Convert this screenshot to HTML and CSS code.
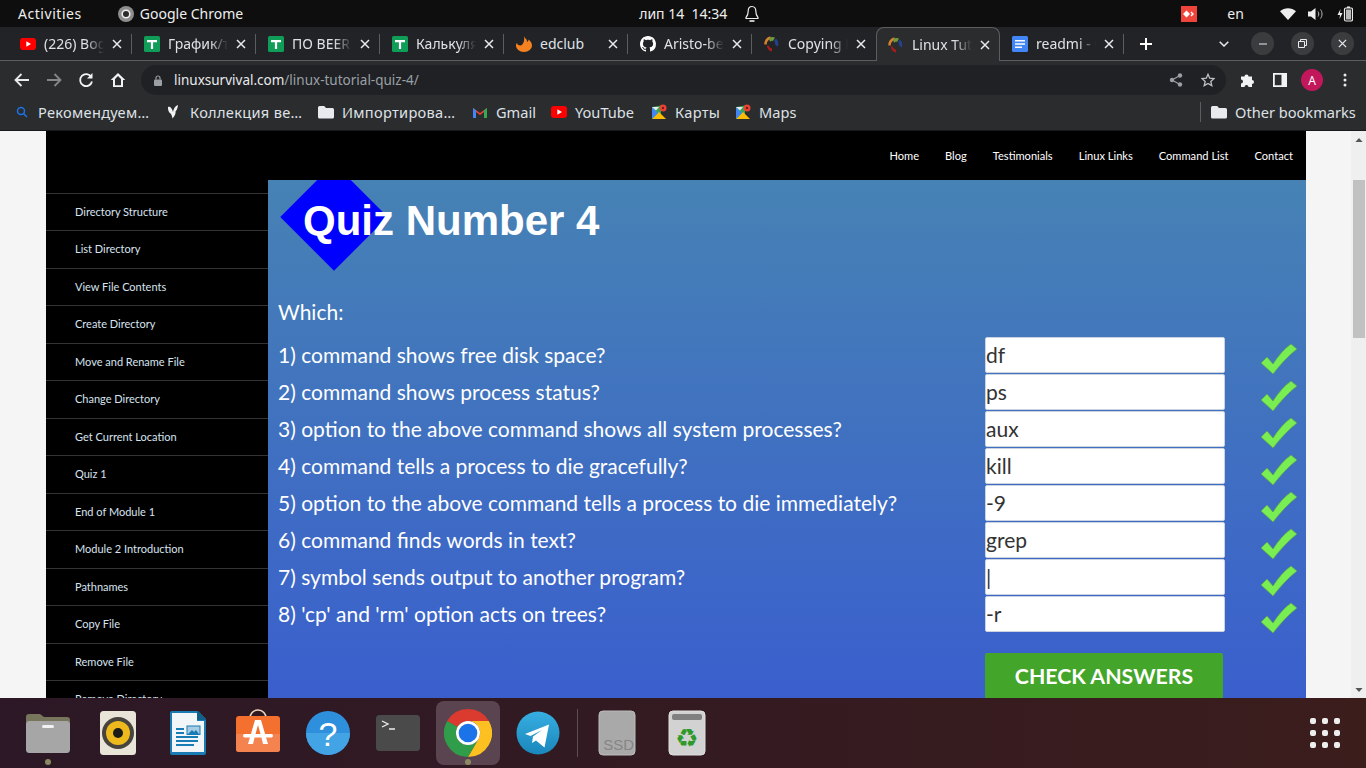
FILE: index.html
```html
<!DOCTYPE html>
<html lang="en">
<head>
  <meta charset="UTF-8">
  <title>Linux Tutorial Quiz 4</title>
  <link rel="stylesheet" href="styles.css">
</head>
<body>
  <svg class="defs" width="0" height="0">
    <symbol id="sheets" viewBox="0 0 16 16">
      <rect width="16" height="16" rx="1.5" fill="#0f9d58"/>
      <path d="M3 4h10v2.2H9.1V13H6.9V6.2H3z" fill="#fff"/>
    </symbol>
    <symbol id="logo" viewBox="0 0 16 16">
      <path d="M1.5 8.5C1.5 5 3.5 2.5 6.5 1.5" fill="none" stroke="#d9822b" stroke-width="2.4"/>
      <path d="M5 2C7 .6 9.5.6 11 1.6L9 5C7.6 4.6 6.6 5 6 6z" fill="#6f9a3c"/>
      <path d="M12 2.5c2.400 2 3 5 1.800 8L11 8.500c.4-1.500 0-2.500-1-3.500z" fill="#27408b"/>
      <path d="M4.500 9c.3 2 1.500 3 3.500 3.400V15.500C5.500 15.300 3.200 13 2.800 10z" fill="#a61c1c"/>
    </symbol>
    <symbol id="maps" viewBox="0 0 16 16">
      <path d="M1 3l9-1.500V15H1z" fill="#34a853"/>
      <path d="M1 15l7-7 7 7z" fill="#fbbc04"/>
      <path d="M1 3l6 6-6 6z" fill="#4285f4"/>
      <path d="M1 3h7L5 6.500z" fill="#e8eaed"/>
      <circle cx="12" cy="4" r="3.500" fill="#ea4335"/>
      <circle cx="12" cy="4" r="1.200" fill="#7a1c14"/>
    </symbol>
    <symbol id="yt" viewBox="0 0 16 12">
      <rect width="16" height="12" rx="3" fill="#f00"/>
      <path d="M6.300 3.200L11 6l-4.700 2.800z" fill="#fff"/>
    </symbol>
    <symbol id="x" viewBox="0 0 10 10">
      <path d="M1 1l8 8M9 1l-8 8" stroke="#e8eaed" stroke-width="1.500" fill="none"/>
    </symbol>
    <symbol id="folder" viewBox="0 0 16 14">
      <path d="M1.500 1h4.700l1.800 2h6.500A1.500 1.500 0 0 1 16 4.500v7.500a1.500 1.500 0 0 1-1.500 1.500h-13A1.500 1.500 0 0 1 0 12V2.500A1.500 1.500 0 0 1 1.500 1z" fill="#e8eaed"/>
    </symbol>
    <symbol id="check" viewBox="0 0 38 32">
      <path d="M1 20l6-6 6 7C18 13 24 6 31 1l6 5C28 13 20 22 13 31z" fill="#78ee52" stroke="#5f9f55" stroke-width=".8"/>
    </symbol>
  </svg>

  <div class="top-bar">
    <span class="activities">Activities</span>
    <svg class="chrome-mono" width="16" height="16" viewBox="0 0 16 16">
      <circle cx="8" cy="8" r="8" fill="#8d8d8d"/>
      <circle cx="8" cy="8" r="3.800" fill="#2b2b2b" stroke="#eee" stroke-width="1.600"/>
    </svg>
    <span class="app-name">Google Chrome</span>
    <span class="clock">лип 14&nbsp; 14:34</span>
    <svg class="bell" width="14" height="18" viewBox="0 0 14 18">
      <path d="M7 1.500c-2.600 0-3.800 2-3.800 4.500 0 3-.8 5-2.200 6.500v1h12v-1c-1.400-1.500-2.200-3.500-2.200-6.500C10.800 3.500 9.600 1.500 7 1.500z" fill="none" stroke="#eee" stroke-width="1.200"/>
      <path d="M4.500 16h5" stroke="#eee" stroke-width="1.600"/>
    </svg>
    <svg class="anydesk" width="16" height="16" viewBox="0 0 16 16">
      <rect width="16" height="16" fill="#ef443b"/>
      <path d="M5.500 4.500L9 8l-3.500 3.500L2 8zM10.500 5.500L13 8l-2.500 2.500L9.500 9.500 11 8 9.500 6.500z" fill="#fff"/>
    </svg>
    <span class="lang">en</span>
    <svg class="wifi" width="16" height="12" viewBox="0 0 16 12">
      <path d="M0 3.200C4.500-.9 11.500-.9 16 3.200L8 12z" fill="#eee"/>
    </svg>
    <svg class="volume" width="15" height="14" viewBox="0 0 15 14">
      <path d="M0 4.500h3L7.500 1v12L3 9.500H0z" fill="#eee"/>
      <path d="M10 4.500c1 1.500 1 3.500 0 5M12.500 2.500c2 2.500 2 6.500 0 9" stroke="#bbb" fill="none"/>
    </svg>
    <svg class="battery" width="16" height="16" viewBox="0 0 16 16">
      <path d="M3.500 3L.5 9H3L2.500 13 5.500 7H3z" fill="#eee"/>
      <rect x="7.500" y="2" width="8" height="13" rx="1.500" fill="none" stroke="#eee" stroke-width="1.200"/>
      <rect x="10" y=".5" width="3" height="1.500" fill="#eee"/>
      <rect x="9" y="3.500" width="5" height="10" fill="#bbb"/>
    </svg>
  </div>

  <div class="tab-strip">
    <div class="tab"><svg class="favicon" width="16" height="12"><use href="#yt"/></svg><span class="tab-title">(226) Bogdan</span><svg class="tab-x" width="10" height="10"><use href="#x"/></svg></div>
    <div class="tab"><svg class="favicon" width="16" height="16"><use href="#sheets"/></svg><span class="tab-title">График/таблица</span><svg class="tab-x" width="10" height="10"><use href="#x"/></svg></div>
    <div class="tab"><svg class="favicon" width="16" height="16"><use href="#sheets"/></svg><span class="tab-title">ПО BEER таблица</span><svg class="tab-x" width="10" height="10"><use href="#x"/></svg></div>
    <div class="tab"><svg class="favicon" width="16" height="16"><use href="#sheets"/></svg><span class="tab-title">Калькулятор</span><svg class="tab-x" width="10" height="10"><use href="#x"/></svg></div>
    <div class="tab">
      <svg class="favicon" width="16" height="16" viewBox="0 0 16 16">
        <path d="M8 0c1 3 3.500 3 3 6 1-.5 1.500-1.500 1.500-2.500C14.500 5 16 7 16 9.500 16 13 12.500 16 8 16S0 13 0 9.500c0-1 .3-2 1-2.500 0 1.500 1.500 2.500 3.500 2.500C6.500 9.500 9 5 8 0z" fill="#f58220"/>
      </svg>
      <span class="tab-title plain">edclub</span><svg class="tab-x" width="10" height="10"><use href="#x"/></svg>
    </div>
    <div class="tab">
      <svg class="favicon" width="16" height="16" viewBox="0 0 16 16">
        <path fill="#fff" d="M8 0C3.580 0 0 3.580 0 8c0 3.540 2.290 6.530 5.470 7.590.4.070.55-.17.55-.38 0-.19-.01-.82-.01-1.490-2.010.37-2.530-.49-2.690-.94-.09-.23-.48-.94-.82-1.130-.28-.15-.68-.52-.01-.53.63-.01 1.080.58 1.230.82.72 1.210 1.870.87 2.330.66.07-.52.28-.87.51-1.070-1.780-.2-3.640-.89-3.640-3.950 0-.87.31-1.590.82-2.150-.08-.2-.36-1.020.08-2.120 0 0 .67-.21 2.200.82.64-.18 1.320-.27 2-.27.68 0 1.360.09 2 .27 1.530-1.040 2.200-.82 2.200-.82.44 1.100.16 1.920.08 2.120.51.56.82 1.270.82 2.150 0 3.070-1.870 3.750-3.650 3.950.29.25.54.73.54 1.480 0 1.070-.01 1.930-.01 2.200 0 .21.15.46.55.38A8.013 8.013 0 0 0 16 8c0-4.420-3.580-8-8-8z"/>
      </svg>
      <span class="tab-title">Aristo-beta</span><svg class="tab-x" width="10" height="10"><use href="#x"/></svg>
    </div>
    <div class="tab"><svg class="favicon" width="16" height="16"><use href="#logo"/></svg><span class="tab-title">Copying Files</span><svg class="tab-x" width="10" height="10"><use href="#x"/></svg></div>
    <div class="tab tab-active"><svg class="favicon" width="16" height="16"><use href="#logo"/></svg><span class="tab-title">Linux Tutorial</span><svg class="tab-x" width="10" height="10"><use href="#x"/></svg></div>
    <div class="tab">
      <svg class="favicon" width="16" height="16" viewBox="0 0 16 16">
        <rect width="16" height="16" rx="1.500" fill="#4285f4"/>
        <path d="M3 4h10v1.500H3zM3 7.200h10v1.500H3zM3 10.400h7v1.500H3z" fill="#fff"/>
      </svg>
      <span class="tab-title">readmi - Google</span><svg class="tab-x" width="10" height="10"><use href="#x"/></svg>
    </div>
    <svg class="new-tab" width="12" height="12" viewBox="0 0 12 12"><path d="M6 0v12M0 6h12" stroke="#fff" stroke-width="2"/></svg>
    <svg class="tab-search" width="10" height="6" viewBox="0 0 10 6"><path d="M.7.700L5 5l4.300-4.300" fill="none" stroke="#e8eaed" stroke-width="1.500"/></svg>
    <span class="win-btn"><svg width="8" height="2"><path d="M0 1h8" stroke="#e8eaed"/></svg></span>
    <span class="win-btn"><svg width="9" height="9" viewBox="0 0 9 9"><path d="M.5 2.500h6v6h-6zM2.500 2.500v-2h6v6h-2" fill="none" stroke="#e8eaed"/></svg></span>
    <span class="win-btn"><svg width="9" height="9" viewBox="0 0 10 10"><path d="M1 1l8 8M9 1l-8 8" stroke="#e8eaed" stroke-width="1.400"/></svg></span>
  </div>

  <div class="toolbar">
    <svg class="tool first" width="16" height="14" viewBox="0 0 16 14"><path d="M15 7H2M7.500 1L1.500 7l6 6" fill="none" stroke="#e8eaed" stroke-width="1.800"/></svg>
    <svg class="tool" width="16" height="14" viewBox="0 0 16 14"><path d="M1 7h13M8.500 1l6 6-6 6" fill="none" stroke="#85878a" stroke-width="1.800"/></svg>
    <svg class="tool" width="16" height="16" viewBox="0 0 16 16"><path d="M13.300 5A6 6 0 1 0 14 9.500" fill="none" stroke="#f1f3f4" stroke-width="1.800"/><path d="M14.500 1v5.500H9z" fill="#f1f3f4"/></svg>
    <svg class="tool" width="16" height="16" viewBox="0 0 16 16"><path d="M8 1L.7 8H3v7h10V8h2.300zM5 13.300V7l3-3 3 3v6.300z" fill="#f1f3f4"/></svg>
    <div class="omnibox">
      <svg width="8" height="11" viewBox="0 0 8 11"><path d="M2 4.500V3a2 2 0 0 1 4 0v1.500" fill="none" stroke="#9aa0a6" stroke-width="1.200"/><rect y="4.500" width="8" height="6.500" rx="1" fill="#9aa0a6"/></svg>
      <span class="url"><b>linuxsurvival.com</b>/linux-tutorial-quiz-4/</span>
      <svg class="share" width="14" height="14" viewBox="0 0 14 14"><path d="M11 2.500L3 7l8 4.500" fill="none" stroke="#9aa0a6" stroke-width="1.200"/><circle cx="11" cy="2.500" r="2.200" fill="#9aa0a6"/><circle cx="3" cy="7" r="2.200" fill="#9aa0a6"/><circle cx="11" cy="11.500" r="2.200" fill="#9aa0a6"/></svg>
      <svg class="star" width="14" height="14" viewBox="0 0 14 14"><path d="M7 1.300l1.700 3.900 4.300.4-3.200 2.800 1 4.200L7 10.400l-3.800 2.200 1-4.200L1 5.600l4.300-.4z" fill="none" stroke="#bdc1c6" stroke-width="1.300"/></svg>
    </div>
    <svg class="ext" width="16" height="16" viewBox="0 0 16 16"><path d="M1 4.500h3.500a2 2 0 1 1 4 0H12V8a2 2 0 1 1 0 4v3H8.500a2 2 0 1 0-4 0H1v-3.500a2 2 0 1 0 0-4z" fill="#f1f3f4"/></svg>
    <svg class="side" width="14" height="14" viewBox="0 0 14 14"><path d="M0 0h14v14H0zM1.800 1.800v10.400H8.500V1.800z" fill="#f1f3f4" fill-rule="evenodd"/></svg>
    <span class="avatar">A</span>
    <svg class="dots" width="4" height="14" viewBox="0 0 4 14"><circle cx="2" cy="2" r="1.500" fill="#e8eaed"/><circle cx="2" cy="7" r="1.500" fill="#e8eaed"/><circle cx="2" cy="12" r="1.500" fill="#e8eaed"/></svg>
  </div>

  <div class="bookmarks">
    <span class="bm cyr"><svg width="16" height="16" viewBox="0 0 16 16"><circle cx="7" cy="7" r="3.500" fill="none" stroke="#1a73e8" stroke-width="1.500"/><path d="M9.500 9.500L13 13" stroke="#1a73e8" stroke-width="1.500"/></svg>Рекомендуем…</span>
    <span class="bm cyr"><svg width="16" height="16" viewBox="0 0 16 16"><path d="M2 3c2-1 4 1 5 5 .5-3 2-6 5-7-.3 3-1 5-2.500 6.500.5 2-1 5-3 7-.5-2.500-1-4-2-5C2.800 8.500 1.800 6 2 3z" fill="#f1f3f4"/></svg>Коллекция ве…</span>
    <span class="bm cyr"><svg width="16" height="14"><use href="#folder"/></svg>Импортирова…</span>
    <span class="bm"><svg width="16" height="12" viewBox="0 0 16 12"><path d="M1 12V2l7 5 7-5v10h-3V6L8 9 4 6v6z" fill="#ea4335"/><path d="M1 12V2l3 2.200V12z" fill="#4285f4"/><path d="M15 12V2l-3 2.200V12z" fill="#34a853"/></svg>Gmail</span>
    <span class="bm"><svg width="16" height="12"><use href="#yt"/></svg>YouTube</span>
    <span class="bm cyr"><svg width="16" height="16"><use href="#maps"/></svg>Карты</span>
    <span class="bm"><svg width="16" height="16"><use href="#maps"/></svg>Maps</span>
    <span class="bm-sep"></span>
    <span class="bm bm-other"><svg width="16" height="14"><use href="#folder"/></svg>Other bookmarks</span>
  </div>

  <div class="page">
    <div class="site">
      <div class="site-head">
        <a>Home</a><a>Blog</a><a>Testimonials</a><a>Linux Links</a><a>Command List</a><a>Contact</a>
      </div>
      <div class="site-body">
        <ul class="side-nav">
          <li>Directory Structure</li>
          <li>List Directory</li>
          <li>View File Contents</li>
          <li>Create Directory</li>
          <li>Move and Rename File</li>
          <li>Change Directory</li>
          <li>Get Current Location</li>
          <li>Quiz 1</li>
          <li>End of Module 1</li>
          <li>Module 2 Introduction</li>
          <li>Pathnames</li>
          <li>Copy File</li>
          <li>Remove File</li>
          <li>Remove Directory</li>
        </ul>
        <div class="content">
          <div class="diamond"></div>
          <h1>Quiz Number 4</h1>
          <p class="which">Which:</p>
          <form class="quiz">
            <label>1) command shows free disk space?</label><input value="df"><svg width="38" height="32"><use href="#check"/></svg>
            <label>2) command shows process status?</label><input value="ps"><svg width="38" height="32"><use href="#check"/></svg>
            <label>3) option to the above command shows all system processes?</label><input value="aux"><svg width="38" height="32"><use href="#check"/></svg>
            <label>4) command tells a process to die gracefully?</label><input value="kill"><svg width="38" height="32"><use href="#check"/></svg>
            <label>5) option to the above command tells a process to die immediately?</label><input value="-9"><svg width="38" height="32"><use href="#check"/></svg>
            <label>6) command finds words in text?</label><input value="grep"><svg width="38" height="32"><use href="#check"/></svg>
            <label>7) symbol sends output to another program?</label><input value="|"><svg width="38" height="32"><use href="#check"/></svg>
            <label>8) 'cp' and 'rm' option acts on trees?</label><input value="-r"><svg width="38" height="32"><use href="#check"/></svg>
            <button type="button">CHECK ANSWERS</button>
          </form>
        </div>
      </div>
    </div>
    <div class="scrollbar">
      <svg width="8" height="4" viewBox="0 0 9 5"><path d="M4.500 0L9 5H0z" fill="#555"/></svg>
      <span class="thumb"></span>
      <svg class="arrow-down" width="8" height="4" viewBox="0 0 9 5"><path d="M0 0h9L4.500 5z" fill="#555"/></svg>
    </div>
  </div>

  <div class="dock">
    <span class="dock-item running">
      <svg width="48" height="48" viewBox="0 0 48 48">
        <path d="M2 8a3 3 0 0 1 3-3h11l4 3h23a3 3 0 0 1 3 3v10H2z" fill="#77755c"/>
        <rect x="2" y="12" width="44" height="32" rx="3.500" fill="#a6a6a6"/>
        <rect x="18" y="16" width="12" height="3" rx="1.500" fill="#f2f2f2"/>
      </svg>
    </span>
    <span class="dock-item">
      <svg width="48" height="48" viewBox="0 0 48 48">
        <rect x="6" y="2" width="36" height="44" rx="3.500" fill="#e8e4d8"/>
        <circle cx="24" cy="24" r="16" fill="#47433d"/>
        <circle cx="24" cy="24" r="12" fill="#edb91d"/>
        <circle cx="24" cy="24" r="5" fill="#1d1b18"/>
      </svg>
    </span>
    <span class="dock-item">
      <svg width="48" height="48" viewBox="0 0 48 48">
        <path d="M8 2h26l8 8v34a2 2 0 0 1-2 2H8a2 2 0 0 1-2-2V4a2 2 0 0 1 2-2z" fill="#1a7cb4"/>
        <path d="M8 4h25v8h7v31H8z" fill="#f3f6f8"/>
        <path d="M34 2l8 8v1h-9V2z" fill="#125f8a"/>
        <path d="M12 19h8v2h-8zM12 23h8v2h-8zM12 27h22v2H12zM12 31h22v2H12zM12 35h18v2H12z" fill="#1a7cb4"/>
        <rect x="23" y="17" width="13" height="8.500" fill="#a8cce2" stroke="#1a7cb4"/>
        <path d="M24 25l4-4 2 2 2-2 3 4z" fill="#1a7cb4"/>
      </svg>
    </span>
    <span class="dock-item">
      <svg width="48" height="48" viewBox="0 0 48 48">
        <path d="M16 9c0-4 3-8 8-8s8 4 8 8" fill="none" stroke="#f0d8b8" stroke-width="1.600"/>
        <rect x="2" y="7" width="44" height="36" rx="3" fill="#f4702f"/>
        <path d="M2 25h44v15a3 3 0 0 1-3 3H5a3 3 0 0 1-3-3z" fill="#f58350"/>
        <path d="M21 11h6l7 24h-5l-1.700-7h-6.600L19 35h-5zM24 16l-2.500 9h5z" fill="#fff"/>
        <rect x="9" y="25" width="30" height="3.500" rx="1.700" fill="#fff"/>
      </svg>
    </span>
    <span class="dock-item">
      <svg width="48" height="48" viewBox="0 0 48 48">
        <circle cx="24" cy="24" r="22" fill="#2e8fdd"/>
        <path d="M2 24a22 22 0 0 0 44 0z" fill="#42a3e5"/>
        <text x="24" y="37" class="help-mark">?</text>
      </svg>
    </span>
    <span class="dock-item">
      <svg width="48" height="48" viewBox="0 0 48 48">
        <rect x="2" y="6" width="44" height="36" rx="3.500" fill="#4a4a4a"/>
        <path d="M8 12l6 3-6 3M15 20h6" fill="none" stroke="#eee" stroke-width="1.300"/>
      </svg>
    </span>
    <span class="dock-item running active">
      <svg width="48" height="48" viewBox="0 0 48 48">
        <path d="M24 0a24 24 0 0 1 20.800 12H24a12 12 0 0 0-10.400 6L3.200 12A24 24 0 0 1 24 0z" fill="#db3a2e"/>
        <path d="M44.800 12A24 24 0 0 1 24 48l10.400-18A12 12 0 0 0 24 12z" fill="#fcc021"/>
        <path d="M3.200 12A24 24 0 0 0 24 48l10.400-18a12 12 0 0 1-20.800-12z" fill="#2f9d4a"/>
        <circle cx="24" cy="24" r="12" fill="#fff"/>
        <circle cx="24" cy="24" r="9.300" fill="#1a73e8"/>
      </svg>
    </span>
    <span class="dock-item">
      <svg width="48" height="48" viewBox="0 0 48 48">
        <defs><linearGradient id="tg" x1="0" y1="0" x2="0" y2="1"><stop offset="0" stop-color="#37aee2"/><stop offset="1" stop-color="#1a87bb"/></linearGradient></defs>
        <circle cx="24" cy="24" r="21.500" fill="url(#tg)"/>
        <path d="M11 25l24-9.500-4.500 23-8.500-7-4 2.500 1-6.500 9-6.500-11.500 6z" fill="#fff"/>
      </svg>
    </span>
    <span class="dock-sep"></span>
    <span class="dock-item">
      <svg width="48" height="48" viewBox="0 0 48 48">
        <rect x="6" y="2" width="36" height="44" rx="4" fill="#a9a9a9" stroke="#bcbcbc"/>
        <text x="41" y="41" class="ssd">SSD</text>
      </svg>
    </span>
    <span class="dock-item">
      <svg width="48" height="48" viewBox="0 0 48 48">
        <rect x="6" y="2" width="36" height="44" rx="4" fill="#d2d2d2" stroke="#e0e0e0"/>
        <rect x="9" y="5" width="30" height="6" rx="2" fill="#808080"/>
        <text x="24" y="38" class="recycle">♻</text>
      </svg>
    </span>
    <span class="app-grid">
      <i></i><i></i><i></i><i></i><i></i><i></i><i></i><i></i><i></i>
    </span>
  </div>
</body>
</html>
```

FILE: styles.css
```css
* {
  box-sizing: border-box;
}
html, body {
  height: 100%;
}
body {
  margin: 0;
  width: 1366px;
  height: 768px;
  overflow: hidden;
  display: flex;
  flex-direction: column;
  font-family: "Noto Sans", sans-serif;
  background: #222;
}
.defs {
  position: absolute;
}
svg {
  flex: none;
  display: block;
}

/* gnome bar */
.top-bar {
  height: 27px;
  display: flex;
  align-items: center;
  padding-left: 18px;
  background: #0e0e0e;
  color: #eee;
  font-size: 14px;
}
.activities {
  letter-spacing: .55px;
}
.chrome-mono {
  margin-left: 36px;
}
.app-name {
  margin-left: 6px;
}
.clock {
  margin-left: 396px;
}
.bell {
  margin-left: 18px;
}
.anydesk {
  margin-left: 422px;
}
.lang {
  margin-left: 30px;
}
.wifi {
  margin-left: 36px;
}
.volume {
  margin-left: 12px;
}
.battery {
  margin-left: 14px;
}

/* tabs */
.tab-strip {
  height: 34px;
  display: flex;
  align-items: center;
  padding-left: 8px;
  background: #222326;
  border-bottom: 1px solid #5c5d5f;
  color: #dee1e6;
  font-size: 14px;
}
.tab {
  width: 124px;
  height: 33px;
  display: flex;
  align-items: center;
  padding-left: 12px;
  position: relative;
}
.tab::after {
  content: "";
  position: absolute;
  right: 0;
  top: 7px;
  height: 20px;
  width: 1px;
  background: #5c5d5f;
}
.tab-active {
  height: 34px;
  margin-bottom: -1px;
  background: #2b2c2e;
  border: 1px solid #5c5d5f;
  border-bottom: 0;
  border-radius: 8px 8px 0 0;
  padding-left: 11px;
}
.tab-active::after,
.tab:nth-child(7)::after {
  display: none;
}
.favicon {
  margin-right: 8px;
  width: 16px;
}
.tab-title {
  width: 60px;
  overflow: hidden;
  white-space: nowrap;
  -webkit-mask-image: linear-gradient(to right, #000 70%, transparent);
  mask-image: linear-gradient(to right, #000 70%, transparent);
}
.tab-title.plain {
  -webkit-mask-image: none;
  mask-image: none;
}
.tab-x {
  margin-left: 8px;
}
.new-tab {
  margin-left: 16px;
}
.tab-search {
  margin-left: 67px;
}
.win-btn {
  width: 23px;
  height: 23px;
  border-radius: 50%;
  margin-left: 17px;
  background: #3b3c3e;
  display: flex;
  align-items: center;
  justify-content: center;
}
.tab-search + .win-btn {
  margin-left: 22px;
}

/* address bar */
.toolbar {
  height: 38px;
  display: flex;
  align-items: center;
  padding-left: 14px;
  background: #2b2c2e;
}
.tool {
  margin-right: 16px;
}
.omnibox {
  width: 1085px;
  height: 30px;
  margin-left: -1px;
  border-radius: 15px;
  background: #202124;
  display: flex;
  align-items: center;
  padding-left: 13px;
  font-size: 13.5px;
  color: #9aa0a6;
}
.url {
  margin-left: 12px;
}
.url b {
  font-weight: 400;
  color: #e8eaed;
}
.share {
  margin-left: auto;
}
.star {
  margin: 0 11px 0 18px;
}
.ext {
  margin-left: 14px;
}
.side {
  margin-left: 17px;
}
.avatar {
  width: 22px;
  height: 22px;
  margin-left: 14px;
  border-radius: 50%;
  background: #c2185b;
  color: #fff;
  font-size: 12px;
  display: flex;
  align-items: center;
  justify-content: center;
}
.dots {
  margin-left: 20px;
}

/* bookmarks */
.bookmarks {
  height: 32px;
  display: grid;
  grid-template-columns: 152px 152px 154px 79px 100px 84px 1fr 1px 165px;
  align-items: center;
  padding: 0 0 6px 14px;
  background: #2b2c2e;
  border-bottom: 1px solid #1a1a1a;
  color: #dee1e6;
  font-size: 14.6px;
}
.bm {
  display: flex;
  align-items: center;
  gap: 8px;
  white-space: nowrap;
}
.cyr {
  letter-spacing: .3px;
}
.bm-sep {
  height: 20px;
  background: #5c5d5f;
}
.bm-other {
  padding-left: 10px;
}

/* the page in the browser */
.page {
  height: 567px;
  display: flex;
  overflow: hidden;
  background: #f5f5f5;
  padding-left: 46px;
}
.site {
  width: 1260px;
  height: 900px;
  background: #000;
  font-family: Lato, sans-serif;
}
.site-head {
  height: 49px;
  display: flex;
  justify-content: flex-end;
  align-items: center;
  gap: 26px;
  padding-right: 13px;
  font-size: 11.1px;
  color: #fff;
}
.site-body {
  display: flex;
}
.side-nav {
  width: 222px;
  margin: 0;
  padding: 12.9px 0 0;
  list-style: none;
}
.side-nav li {
  height: 37.5px;
  padding-left: 29px;
  border-top: 1px solid #333;
  font-size: 11px;
  line-height: 36.5px;
  color: #d8e4f0;
}
.content {
  width: 1038px;
  height: 518px;
  position: relative;
  overflow: hidden;
  padding-left: 11px;
  background: linear-gradient(#4682b4, #3a5fcd);
  color: #fff;
}
.diamond {
  position: absolute;
  left: 28px;
  top: -1px;
  width: 76px;
  height: 76px;
  background: #00f;
  transform: rotate(45deg);
}
.content h1 {
  position: relative;
  margin: 17px 0 0 24px;
  font: bold 42px/48px "Liberation Sans", sans-serif;
}
.which {
  margin: 51px 0 0 -1px;
  font-size: 21px;
  line-height: 32px;
}
.quiz {
  margin-top: 9px;
  display: grid;
  grid-template-columns: 706px 240px 38px;
  grid-auto-rows: 36px;
  row-gap: 1px;
  font-size: 21px;
}
.quiz label {
  margin-left: -1px;
  line-height: 36px;
}
.quiz input {
  width: 240px;
  height: 36px;
  padding: 0 0 2px;
  border: 1px solid #ccd3e0;
  border-radius: 2px;
  background: #fff;
  color: #333;
  font: 21px Lato, sans-serif;
}
.quiz svg {
  margin: 6px 0 0 35px;
}
.quiz button {
  grid-column: 2;
  width: 238px;
  height: 46px;
  margin-top: 20px;
  border: none;
  border-radius: 2px;
  background: #43a529;
  color: #fff;
  font: bold 21.3px Lato, sans-serif;
}
.scrollbar {
  width: 15px;
  margin-left: 45px;
  background: #efefef;
  display: flex;
  flex-direction: column;
  align-items: center;
  padding-top: 7px;
}
.thumb {
  width: 12px;
  height: 158px;
  margin-top: 38px;
  background: #c1c1c1;
}
.arrow-down {
  margin-top: auto;
  margin-bottom: 6px;
}

/* ubuntu dock */
.dock {
  height: 70px;
  display: flex;
  align-items: center;
  padding-left: 13px;
  background: linear-gradient(to right, #2c1826, #3b1d1c);
}
.dock-item {
  width: 70px;
  height: 70px;
  display: flex;
  align-items: center;
  justify-content: center;
  position: relative;
}
.running::after {
  content: "";
  position: absolute;
  left: 32px;
  bottom: 3px;
  width: 6px;
  height: 6px;
  border-radius: 50%;
  background: #8d8a63;
}
.active::before {
  content: "";
  position: absolute;
  left: 3px;
  top: 3px;
  width: 64px;
  height: 64px;
  border-radius: 8px;
  background: #5a4450;
}
.active svg {
  position: relative;
}
.dock-sep {
  width: 1px;
  height: 48px;
  margin: 0 4px;
  background: #5f4d56;
}
.help-mark {
  font: 34px "Liberation Sans", sans-serif;
  fill: #fff;
  text-anchor: middle;
}
.ssd {
  font: 15px "Liberation Sans", sans-serif;
  fill: #858585;
  text-anchor: end;
}
.recycle {
  font: 26px "DejaVu Sans", sans-serif;
  fill: #2f9a2a;
  text-anchor: middle;
}
.app-grid {
  margin-left: auto;
  margin-right: 26px;
  display: grid;
  grid-template-columns: repeat(3, 6px);
  gap: 6px;
}
.app-grid i {
  height: 6px;
  border-radius: 2px;
  background: #eee;
}
```
